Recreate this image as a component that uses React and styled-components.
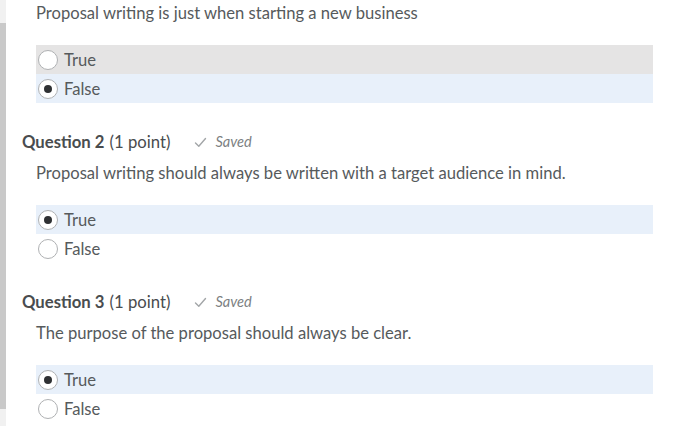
import styled, { createGlobalStyle } from 'styled-components';

const GlobalStyle = createGlobalStyle`
    body {
        margin: 0;
        background: #ffffff;
        font-family: Lato, "Noto Sans", sans-serif;
        color: #565a5c;
    }
`;

const Page = styled.div`
    display: flex;
    height: 426px;
    overflow: hidden;
`;

const Rail = styled.div`
    width: 6px;
    flex-shrink: 0;
    display: flex;
    flex-direction: column;
    background: #f1f1f1;
`;

const RailBar = styled.div`
    margin-top: 23px;
    height: 386px;
    background: #c9c9c9;
`;

const Content = styled.div`
    flex: 1;
    padding: 3px 0 0 16px;
`;

const Question = styled.section`
    & + & {
        margin-top: 29px;
    }
`;

const Header = styled.div`
    display: flex;
    align-items: center;
    height: 20px;
    font-size: 16.7px;
    line-height: 20px;
    color: #494c4e;
    margin-bottom: 11px;
`;

const Number = styled.strong`
    font-weight: 700;
    margin-right: 5px;
`;

const Saved = styled.span`
    display: flex;
    align-items: center;
    gap: 8px;
    margin-left: 24px;
    font-size: 14.6px;
    font-style: italic;
    color: #7c7f82;
`;

const Prompt = styled.p`
    margin: 0 0 22px 14px;
    font-size: 16.6px;
    line-height: 20px;
    color: #565a5c;
`;

const Options = styled.div`
    margin-left: 14px;
    width: 617px;
    display: flex;
    flex-direction: column;
`;

const Option = styled.label`
    display: flex;
    align-items: center;
    gap: 6px;
    height: 29px;
    padding-left: 2px;
    font-size: 16.6px;
    color: #565a5c;
    background: ${p => (p.$hover ? '#e5e4e4' : p.$checked ? '#e8f0fa' : 'transparent')};
`;

const Radio = styled.span`
    box-sizing: border-box;
    width: 20px;
    height: 20px;
    border-radius: 50%;
    border: 1px solid #afb1b3;
    background: #ffffff;
    display: flex;
    align-items: center;
    justify-content: center;

    &::after {
        content: '';
        width: 8px;
        height: 8px;
        border-radius: 50%;
        background: ${p => (p.$checked ? '#2f3133' : 'transparent')};
    }
`;

function Check() {
    return (
        <svg width="13" height="11" viewBox="0 0 13 11" fill="none">
            <path d="M1.5 6 L4.8 9.2 L11.5 1.5" stroke="#a3a6a8" strokeWidth="1.4" strokeLinecap="round" strokeLinejoin="round" />
        </svg>
    );
}

const questions = [
    { text: 'Proposal writing is just when starting a new business', answer: 'False', hover: 'True' },
    { number: 2, text: 'Proposal writing should always be written with a target audience in mind.', answer: 'True' },
    { number: 3, text: 'The purpose of the proposal should always be clear.', answer: 'True' },
];

export default function App() {
    return (
        <>
            <GlobalStyle />
            <Page>
                <Rail>
                    <RailBar />
                </Rail>
                <Content>
                    {questions.map((q, i) => (
                        <Question key={i}>
                            {q.number && (
                                <Header>
                                    <Number>Question {q.number}</Number>
                                    (1 point)
                                    <Saved>
                                        <Check />
                                        Saved
                                    </Saved>
                                </Header>
                            )}
                            <Prompt>{q.text}</Prompt>
                            <Options>
                                {['True', 'False'].map(opt => (
                                    <Option key={opt} $checked={q.answer === opt} $hover={q.hover === opt}>
                                        <Radio $checked={q.answer === opt} />
                                        {opt}
                                    </Option>
                                ))}
                            </Options>
                        </Question>
                    ))}
                </Content>
            </Page>
        </>
    );
}
